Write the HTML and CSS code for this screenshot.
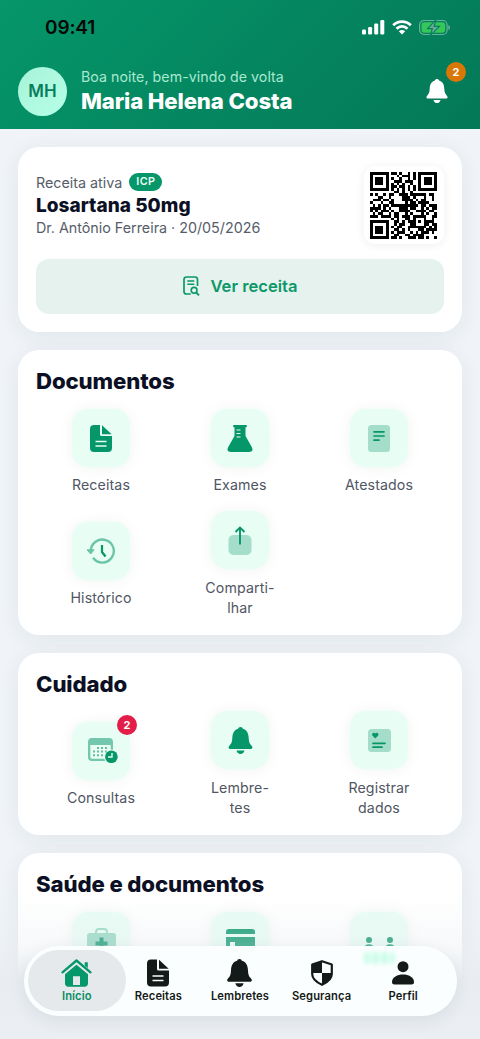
FILE: index.html
```html
<!DOCTYPE html>
<html lang="pt-BR">
<head>
<meta charset="utf-8">
<title>Início</title>
<link rel="stylesheet" href="styles.css">
</head>
<body>
<svg class="defs" aria-hidden="true">
  <symbol id="doc" viewBox="0 0 22 27"><path fill-rule="evenodd" d="M4 0H10V9.500Q10 11 11.500 11H22V23Q22 27 18 27H4Q0 27 0 23V4Q0 0 4 0ZM5.500 15.700V17.300H16.500V15.700ZM5.500 20.200V21.800H16.500V20.200Z"/><path d="M12 .3 21.700 9.300H12Z"/></symbol>
  <symbol id="bell" viewBox="0 0 24 27"><path d="M12 0C13.500 0 14 .8 14.300 1.800C18.500 3 20 6.500 20.200 11C20.400 15 21 16.500 23.300 19C24.600 20.600 23.800 22 22 22H2C.2 22-.6 20.600.7 19C3 16.500 3.600 15 3.800 11C4 6.500 5.500 3 9.700 1.800C10 .8 10.500 0 12 0ZM8 23.500H16C15.500 25.800 14 27 12 27S8.500 25.800 8 23.500Z"/></symbol>
</svg>
<div class="screen">
  <header class="header">
    <div class="status">
      <span class="time">09:41</span>
      <div class="status-icons">
        <svg width="23" height="15" viewBox="0 0 23 15" fill="#fff"><rect x="0" y="9.500" width="4" height="5" rx="1.200"/><rect x="6.100" y="7" width="4" height="7.500" rx="1.200"/><rect x="12.200" y="3.500" width="4" height="11" rx="1.200"/><rect x="18.300" y="0" width="4" height="14.500" rx="1.200"/></svg>
        <svg width="20" height="15" viewBox="0 0 20 15" fill="none" stroke="#fff" stroke-width="2.700"><path d="M1.200 5.300C6.200.4 13.800.4 18.800 5.300M4.500 8.700C7.600 5.700 12.400 5.700 15.500 8.700"/><path d="M10 14.500 6.800 11.200Q10 8.700 13.200 11.200Z" fill="#fff" stroke="none"/></svg>
        <svg width="31" height="17" viewBox="0 0 31 17"><rect x=".6" y="1.500" width="27.500" height="14" rx="4.500" fill="none" stroke="#68b39b" stroke-width="1.200"/><rect x="2.500" y="3.300" width="23.700" height="10.400" rx="3" fill="#35c759"/><path d="M29.300 6Q31 6.500 31 8.500T29.300 11Z" fill="#68b39b"/><path d="M17 .7 8.600 9.600H13.300L11.500 16.300 20.400 7.300H15.200Z" fill="#68a99a" stroke="#087e5d" stroke-width="1.200"/></svg>
      </div>
    </div>
    <div class="profile">
      <div class="avatar">MH</div>
      <div class="greeting">
        <div class="hello">Boa noite, bem-vindo de volta</div>
        <div class="name">Maria Helena Costa</div>
      </div>
      <div class="notify"><svg width="22" height="24"><use href="#bell"/></svg><span class="badge orange">2</span></div>
    </div>
  </header>

  <main class="content">
    <section class="card recipe">
      <div class="recipe-top">
        <div class="recipe-text">
          <div class="recipe-status">Receita ativa <span class="icp">ICP</span></div>
          <div class="drug">Losartana 50mg</div>
          <div class="doctor">Dr. Antônio Ferreira · 20/05/2026</div>
        </div>
        <div class="qr-box"><svg id="qr" width="67" height="67" viewBox="0 0 25 25"></svg></div>
      </div>
      <div class="view-button">
        <svg width="17" height="20" viewBox="0 0 17 20" fill="none" stroke="#0b9869"><path stroke-width="1.700" d="M7.800 18H3.500Q1 18 1 15.500V3.500Q1 1 3.500 1H12Q14.500 1 14.500 3.500V10"/><path stroke-width="1.400" d="M4.300 5H11.300M4.300 8.200H11.300"/><circle cx="11.100" cy="14.300" r="2.900" stroke-width="1.600"/><path stroke-width="1.900" d="M13.200 16.500 16 19.300"/></svg>
        <span>Ver receita</span>
      </div>
    </section>

    <section class="card">
      <h2>Documentos</h2>
      <div class="grid">
        <div class="item"><div class="tile"><svg width="22" height="27"><use href="#doc"/></svg></div><span>Receitas</span></div>
        <div class="item"><div class="tile"><svg width="26" height="27" viewBox="0 0 26 27"><path d="M6 1Q6 0 7 0H19Q20 0 20 1T19 2.200H18.500V11L24.500 21.500C26.500 25 25.500 27 22 27H4C.5 27-.5 25 1.500 21.500L7.500 11V2.200H7Q6 2 6 1Z"/><path d="M9.500 5H13.500M9.500 8.500H13.500M9.500 12H13.500" stroke="#e6fbf3" stroke-width="1.200"/></svg></div><span>Exames</span></div>
        <div class="item"><div class="tile"><svg width="22" height="27" viewBox="0 0 22 27"><rect width="22" height="27" rx="3.500" opacity=".3"/><path d="M6 6.800H16M6 11H16M6 15.200H11" stroke="#059669" stroke-width="1.700" stroke-linecap="round"/></svg></div><span>Atestados</span></div>
        <div class="item"><div class="tile"><svg width="28" height="27" viewBox="0 0 28 27" fill="none"><g opacity=".55" stroke="#059669" stroke-width="2.300"><path d="M3.800 13A11.500 11.500 0 1 1 6 19.800"/><path d="M0 11.800H7.200L3.700 16Z" fill="#059669" stroke-width="1"/></g><path d="M15 7V14L18.500 18.500" stroke="#059669" stroke-width="2.200"/></svg></div><span>Histórico</span></div>
        <div class="item two-line"><div class="tile"><svg width="24" height="29" viewBox="0 0 24 29"><rect x=".5" y="9" width="23" height="20" rx="5" opacity=".3"/><path d="M12 18.500V2M7.500 6 12 1.500 16.500 6" fill="none" stroke="#059669" stroke-width="1.900"/></svg></div><span>Comparti-<br>lhar</span></div>
      </div>
    </section>

    <section class="card">
      <h2>Cuidado</h2>
      <div class="grid">
        <div class="item"><div class="tile"><svg class="cal" width="31" height="26" viewBox="0 0 31 26"><path fill-rule="evenodd" opacity=".52" d="M4 0H21Q25 0 25 4V19Q25 23 21 23H4Q0 23 0 19V4Q0 0 4 0ZM2.300 7V18.700Q2.300 20.700 4.300 20.700H20.700Q22.700 20.700 22.700 18.700V7Z"/><path d="M9 10H21M5 13.600H21M5 17.200H17" stroke="#68bd9f" stroke-width="2" stroke-dasharray="2 2"/><circle cx="23.400" cy="18.800" r="7.300" fill="#e6fbf3"/><circle cx="23.400" cy="18.800" r="6.300"/><path d="M24 15V19H20" fill="none" stroke="#e6fbf3" stroke-width="1.400"/></svg><b class="badge red">2</b></div><span>Consultas</span></div>
        <div class="item two-line"><div class="tile"><svg width="25" height="27"><use href="#bell"/></svg></div><span>Lembre-<br>tes</span></div>
        <div class="item two-line"><div class="tile"><svg width="23" height="23" viewBox="0 0 23 23"><rect width="23" height="23" rx="3.500" opacity=".3"/><path d="M7.300 9.600 4.400 6.600C3.200 4.700 5.800 2.700 7.300 4.500C8.800 2.700 11.400 4.700 10.200 6.600Z"/><path d="M5 14.300H17M5 18.200H14" stroke="#059669" stroke-width="1.700" stroke-linecap="round"/></svg></div><span>Registrar<br>dados</span></div>
      </div>
    </section>

    <section class="card health">
      <h2>Saúde e documentos</h2>
      <div class="grid">
        <div class="item"><div class="tile"><svg width="29" height="27" viewBox="0 0 29 27"><rect y="5" width="29" height="22" rx="3" opacity=".38"/><path d="M9 5V4Q9 1 12 1H17Q20 1 20 4V5" fill="none" stroke="#059669" stroke-width="1.900" opacity=".38"/><path d="M12.500 9.500H16.500V13.500H20.500V17.500H16.500V21.500H12.500V17.500H8.500V13.500H12.500Z"/></svg></div></div>
        <div class="item"><div class="tile"><svg width="29" height="24" viewBox="0 0 29 24"><path fill-rule="evenodd" d="M3 0H26Q29 0 29 3V5H0V3Q0 0 3 0ZM0 8H29V21Q29 24 26 24H3Q0 24 0 21ZM4 13V17H9V13Z"/></svg></div></div>
        <div class="item"><div class="tile"><svg class="family" width="31" height="12" viewBox="0 0 31 12"><circle cx="5" cy="3" r="3"/><circle cx="26" cy="3" r="3"/><path d="M0 12Q0 7.300 5 7.300T10 12ZM21 12Q21 7.300 26 7.300T31 12Z"/></svg></div></div>
      </div>
    </section>
  </main>

  <div class="fade"></div>
  <nav class="nav">
    <div class="nav-item active"><svg width="31" height="28" viewBox="0 0 31 28"><path d="M1.500 13.300 15.500 1.500 29.500 13.300" fill="none" stroke="#059669" stroke-width="2.300" stroke-linecap="round" stroke-linejoin="round"/><path fill-rule="evenodd" d="M23.700 3.300H26.800V9L23.700 6.400ZM15.500 5.700 27 15.300V24Q27 27.700 23.500 27.700H7.500Q4 27.700 4 24V15.300ZM12 17.300V26H19V17.300Z"/></svg><span>Início</span></div>
    <div class="nav-item"><svg width="22" height="28"><use href="#doc"/></svg><span>Receitas</span></div>
    <div class="nav-item"><svg width="25" height="28"><use href="#bell"/></svg><span>Lembretes</span></div>
    <div class="nav-item"><svg class="low" width="22" height="26" viewBox="0 0 22 26"><path d="M11 1.200 20.800 4.500V14C20.800 19 16 22.500 11 24.800C6 22.500 1.200 19 1.200 14V4.500Z" fill="none" stroke="#141a18" stroke-width="2.200" stroke-linejoin="round"/><path d="M11 1V13H1.200V4.500ZM11 13H20.800C21 19 16 22.500 11 24.800Z"/></svg><span>Segurança</span></div>
    <div class="nav-item"><svg class="lower" width="22" height="24" viewBox="0 0 22 24"><circle cx="11" cy="5.700" r="5.500"/><path d="M0 21C0 11 22 11 22 21Q22 23.500 19.500 23.500H2.500Q0 23.500 0 21Z"/></svg><span>Perfil</span></div>
    <i class="glow"></i>
  </nav>
</div>
<script src="qr.js"></script>
</body>
</html>
```
FILE: styles.css
```css
* { box-sizing: border-box; }
body { margin: 0; font-family: Inter, "Liberation Sans", sans-serif; color: #0c1024; }
svg { display: block; flex: none; }
.defs { position: absolute; width: 0; height: 0; }
.screen { position: relative; width: 480px; height: 1039px; overflow: hidden; background: #f0f4f8; }
.header { height: 129px; padding: 13px 18px 0; background: linear-gradient(135deg, #059669 0%, #047857 100%); }
.status { display: flex; justify-content: space-between; align-items: center; height: 28px; padding: 0 12px 0 27px; }
.time { color: #050807; font-size: 19px; font-weight: 600; letter-spacing: -.15px; }
.status-icons { display: flex; align-items: center; gap: 7px; }
.profile { display: flex; align-items: center; height: 50px; margin-top: 25px; }
.avatar { display: flex; align-items: center; justify-content: center; width: 49px; height: 49px; border-radius: 50%; background: linear-gradient(135deg, #a7f3d8, #b5ffe7); color: #087e5c; font-size: 17px; font-weight: 600; }
.greeting { flex: 1; margin-left: 14px; padding-bottom: 2px; white-space: nowrap; }
.hello { color: #a9e9d1; font-size: 14.200px; line-height: 22px; letter-spacing: .05px; }
.name { color: #fff; font-size: 22.200px; font-weight: 800; line-height: 25px; padding-bottom: 2px; letter-spacing: -.13px; }
.notify { position: relative; width: 22px; margin-right: 14px; fill: #fff; }
.badge { position: absolute; display: flex; align-items: center; justify-content: center; width: 20px; height: 20px; border-radius: 50%; color: #fff; font-size: 11px; font-weight: 700; }
.orange { top: -17px; left: 20px; background: #d97706; }
.red { top: -7px; right: -7px; background: #e11d48; }
.content { display: flex; flex-direction: column; gap: 18px; padding: 18px 18px 0; }
.card { flex: none; padding: 18px 18px 17px; border-radius: 21px; background: #fff; box-shadow: 0 4px 22px rgba(15, 40, 50, .07); }
.recipe { height: 185px; padding-bottom: 18px; }
.health { height: 190px; }
.recipe-top { display: flex; justify-content: space-between; align-items: center; height: 80px; }
.recipe-text { padding-bottom: 1px; white-space: nowrap; color: #565d69; font-size: 14.300px; }
.recipe-status { display: flex; align-items: center; gap: 7px; height: 22px; }
.icp { padding: 0 7px; border-radius: 9px; background: #059669; color: #e9fff6; font-size: 10.800px; font-weight: 600; line-height: 18px; letter-spacing: .4px; }
.drug { padding-top: 2px; color: #0c1024; font-size: 19px; font-weight: 800; line-height: 22px; letter-spacing: .03px; }
.doctor { line-height: 21px; }
.qr-box { display: flex; align-items: center; justify-content: center; width: 80px; height: 78px; padding-right: 1px; border-radius: 10px; background: #fff; box-shadow: 0 1px 10px rgba(0, 0, 0, .07); }
.view-button { display: flex; align-items: center; justify-content: center; gap: 10px; height: 55px; margin-top: 14px; padding-bottom: 1px; border-radius: 13px; background: #e5f2ed; color: #0b9869; font-size: 16.600px; font-weight: 600; }
.view-button svg { margin-left: 1px; }
h2 { margin: 0 0 16px; font-size: 22.200px; font-weight: 800; line-height: 25px; letter-spacing: -.12px; }
.grid { display: grid; grid-template-columns: repeat(3, 1fr); gap: 17px 9px; align-items: center; }
.item { display: flex; flex-direction: column; align-items: center; gap: 8px; color: #505663; font-size: 14.200px; line-height: 20px; text-align: center; letter-spacing: .12px; }
.tile { position: relative; display: flex; align-items: center; justify-content: center; width: 58px; height: 58px; border-radius: 16px; background: #e8fdf4; box-shadow: 0 0 4px #effdf7, 0 1px 16px rgba(20, 50, 45, .05); fill: #059669; }
.two-line .tile { margin: -1px 0 1px; }
.cal { margin-left: 4px; }
.family { margin-top: 4px; }
.fade { position: absolute; inset: 895px 0 0; background: linear-gradient(rgba(233, 237, 241, 0), rgba(233, 237, 241, .35) 50px, #e9edf1 85px, #ebeff3); }
.nav { position: absolute; left: 24px; bottom: 23px; display: flex; width: 433px; height: 70px; padding: 0 13px 0 12px; border-radius: 35px; background: rgba(251, 254, 254, .98); box-shadow: 0 5px 18px rgba(20, 35, 45, .08); }
.nav-item { position: relative; display: flex; flex: 1 1 0; min-width: 0; flex-direction: column; align-items: center; justify-content: space-between; padding: 13px 0; color: #141a18; fill: #141a18; font-size: 11.200px; font-weight: 600; line-height: 14px; letter-spacing: .08px; }
.nav-item svg, .nav-item span { position: relative; }
.low { margin-top: 1px; }
.lower { margin-top: 2px; }
.active { color: #078d63; fill: #059669; }
.active::before { content: ""; position: absolute; inset: 4px -8px 5px; border-radius: 31px; background: #e5e9eb; }
.glow { position: absolute; left: 340px; top: 6px; width: 31px; height: 12px; border-radius: 4px; background: repeating-linear-gradient(90deg, #b5fce1 0 5px, #e2fdf3 5px 9px); filter: blur(2px); opacity: .75; }
```
FILE: qr.js
```javascript
const modules = [
  "1111111011010010101111111",
  "1000001000101110101000001",
  "1011101010010010101011101",
  "1011101001110111001011101",
  "1011101010101001001011101",
  "1000001011011010101000001",
  "1111111010101010101111111",
  "0000000001101001000000000",
  "1010010110011101111110110",
  "0001100100001110100010010",
  "0111011010001111010110010",
  "1000100110000101101111000",
  "0101011011111111110110111",
  "1111010100011101100101011",
  "1010111010011110011110110",
  "0101100101100101000101001",
  "1110111101101110111110011",
  "0000000010100110100010010",
  "1111111001101011101011110",
  "1000001001011001100011011",
  "1011101010110011111110101",
  "1011101001101010001101111",
  "1011101010111001010111010",
  "1000001001100110111100000",
  "1111111011010011101101001"
];
document.getElementById("qr").innerHTML = '<g shape-rendering="crispEdges">' + modules.map((row, y) =>
  [...row].map((v, x) => v === "1" ? `<rect x="${x}" y="${y}" width="1" height="1"/>` : "").join("")
).join("") + "</g>";
```
